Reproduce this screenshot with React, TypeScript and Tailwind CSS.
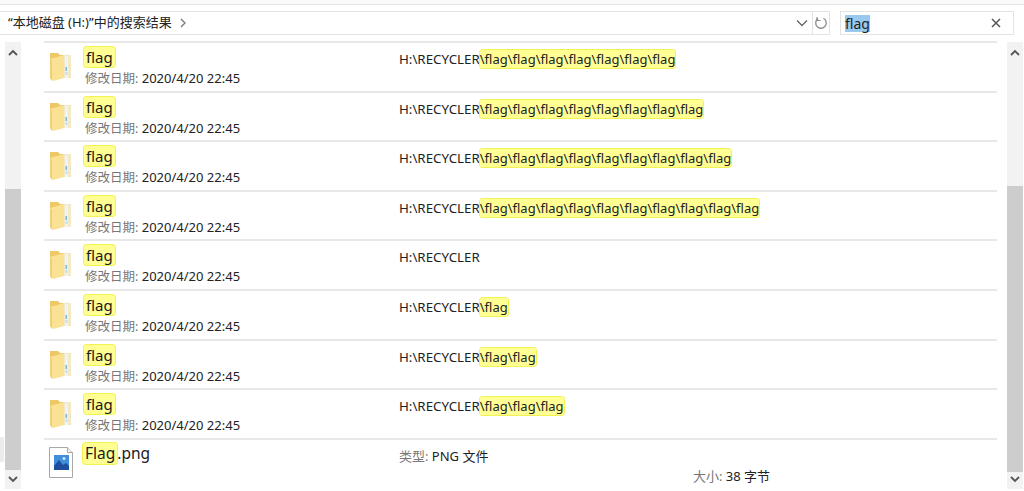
const font = "font-['Noto_Sans','Noto_Sans_CJK_SC',sans-serif]";

const rows = [
  "\\flag\\flag\\flag\\flag\\flag\\flag\\flag",
  "\\flag\\flag\\flag\\flag\\flag\\flag\\flag\\flag",
  "\\flag\\flag\\flag\\flag\\flag\\flag\\flag\\flag\\flag",
  "\\flag\\flag\\flag\\flag\\flag\\flag\\flag\\flag\\flag\\flag",
  "",
  "\\flag",
  "\\flag\\flag",
  "\\flag\\flag\\flag",
];

function Hit({ children, className = "" }: { children: React.ReactNode; className?: string }) {
  return <span className={`rounded-[3px] bg-[#ffff94] shadow-[0_0_0_1px_#f2f255] ${className}`}>{children}</span>;
}

function FolderIcon() {
  return (
    <svg width="22" height="29" viewBox="0 0 22 29" className="shrink-0">
      <path d="M0 1h8l2 2h10v22H2L0 23z" fill="#eec766" />
      <path d="M0 7l14-4v23L3 29 0 26z" fill="#fbe193" />
      <path d="M0 7l2 2v20l-2-3z" fill="#f1cf78" />
      <path d="M14 3h7v23h-7z" fill="#f3e9c6" />
      <path d="M15 4h3v22h-3z" fill="#eef3f5" />
      <path d="M15.500 15h1.500v4h-1.500z" fill="#7db6df" />
      <path d="M15.500 20h2v3h-2z" fill="#c3dff0" />
    </svg>
  );
}

function ImageIcon() {
  return (
    <svg width="24" height="31" viewBox="0 0 24 31" className="shrink-0">
      <path d="M.5.500h18l5 5v25H.5z" fill="#fff" stroke="#a8a8a8" />
      <path d="M18.500.500v5h5" fill="#f0f0f0" stroke="#a8a8a8" />
      <rect x="5" y="8" width="15" height="15" fill="#3f8fdc" />
      <path d="M5 23v-4l5-6 4 5 3-2 3 3v4z" fill="#1e4e9c" />
      <circle cx="15" cy="11.500" r="1.500" fill="#cfe6fa" />
    </svg>
  );
}

function FolderRow({ hit }: { hit: string }) {
  return (
    <div className="flex h-[49.600px] border-t-2 border-[#e8e8e8] pl-[5px]">
      <div className="pl-[1px] pt-[9px]"><FolderIcon /></div>
      <div className="ml-[12px] w-[315px] pt-[4px]">
        <div className="flex h-[21px] items-start text-[15px] text-[#1a1a1a]"><Hit className="h-[20px] px-[2px] leading-[20px]">flag</Hit></div>
        <div className="mt-[1px] pl-[1px] text-[13px] leading-[18px] whitespace-nowrap text-[#222]"><span className="text-[12.500px] text-[#777]">修改日期:</span> 2020/4/20 22:45</div>
      </div>
      <div className="pt-[7px] text-[13px] leading-[18px] whitespace-nowrap text-[#222]">
        <span className="text-[13.300px]">H:\RECYCLER</span>{hit && <Hit>{hit}</Hit>}
      </div>
    </div>
  );
}

function Scrollbar({ thumbTop, thumbHeight }: { thumbTop: number; thumbHeight: number }) {
  return (
    <div className="relative flex h-full w-[16px] shrink-0 flex-col items-center bg-[#f2f2f2]">
      <svg width="12" height="8" viewBox="0 0 12 8" className="absolute top-[7px]"><path d="M2 6l4-4 4 4" fill="none" stroke="#555" strokeWidth="1.800" /></svg>
      <div className="absolute inset-x-0 bg-[#cdcdcd]" style={{ top: thumbTop, height: thumbHeight }} />
      <svg width="12" height="8" viewBox="0 0 12 8" className="absolute bottom-[6px]"><path d="M2 2l4 4 4-4" fill="none" stroke="#555" strokeWidth="1.800" /></svg>
    </div>
  );
}

export default function App() {
  return (
    <div className={`${font} relative flex h-[491px] w-[1024px] flex-col overflow-hidden bg-white`}>
      <div className="h-[5px] border-b border-[#e3e3e3] bg-[#fafafa]" />
      <div className="mt-[6px] flex h-[24px] shrink-0">
        <div className="flex w-[830px] items-center border border-l-0 border-[#e3e3e3] text-[13px] text-[#222]">
          <span className="ml-[8px]">“本地磁盘 (H:)”中的搜索结果</span>
          <svg width="10" height="10" viewBox="0 0 10 10" className="ml-[6px]"><path d="M3 1l4 4-4 4" fill="none" stroke="#777" strokeWidth="1.300" /></svg>
          <svg width="12" height="8" viewBox="0 0 12 8" className="ml-auto mr-[4px]"><path d="M1 1.500l5 5 5-5" fill="none" stroke="#666" strokeWidth="1.300" /></svg>
          <div className="flex h-full w-[17px] items-center justify-center border-l border-[#e3e3e3]">
            <svg width="14" height="14" viewBox="0 0 14 14"><path d="M9.500 2.300A5.300 5.300 0 1 1 4 2.600" fill="none" stroke="#8a8a8a" strokeWidth="1.300" /><path d="M3 1v3.500h3.500" fill="none" stroke="#8a8a8a" strokeWidth="1.200" /></svg>
          </div>
        </div>
        <div className="ml-[10px] flex w-[174px] items-center border border-[#e3e3e3] pl-[4px] text-[14px] text-[#222]">
          <span className="bg-[#99c9ef] leading-[17px]">flag</span>
          <svg width="10" height="10" viewBox="0 0 10 10" className="ml-auto mr-[12px]"><path d="M1 1l8 8M9 1l-8 8" stroke="#555" strokeWidth="1.500" /></svg>
        </div>
      </div>
      <div className="mt-[7px] flex min-h-0 flex-1 pb-[2px] pl-[5px] pr-[1px]">
        <Scrollbar thumbTop={147} thumbHeight={281} />
        <div className="-mt-[1px] ml-[23px] w-[953px] shrink-0">
          {rows.map((hit, i) => <FolderRow key={i} hit={hit} />)}
          <div className="flex border-t-2 border-[#e8e8e8] pl-[5px]">
            <div className="pt-[7px]"><ImageIcon /></div>
            <div className="ml-[10px] flex h-[24px] w-[316px] items-start pt-[3px] text-[15.500px] leading-[21px] text-[#1a1a1a]"><Hit className="h-[21px] px-[2px]">Flag</Hit><span>.png</span></div>
            <div className="relative flex-1 pt-[7px] text-[13px] leading-[18px] text-[#222]">
              <span className="text-[#777]">类型:</span> PNG 文件
              <div className="absolute left-[294px] top-[27px] whitespace-nowrap"><span className="text-[#777]">大小:</span> 38 字节</div>
            </div>
          </div>
        </div>
        <div className="ml-auto h-full"><Scrollbar thumbTop={144} thumbHeight={286} /></div>
      </div>
      <div className="absolute left-0 top-[437px] h-[25px] w-[4px] bg-[#ececec]" />
    </div>
  );
}
